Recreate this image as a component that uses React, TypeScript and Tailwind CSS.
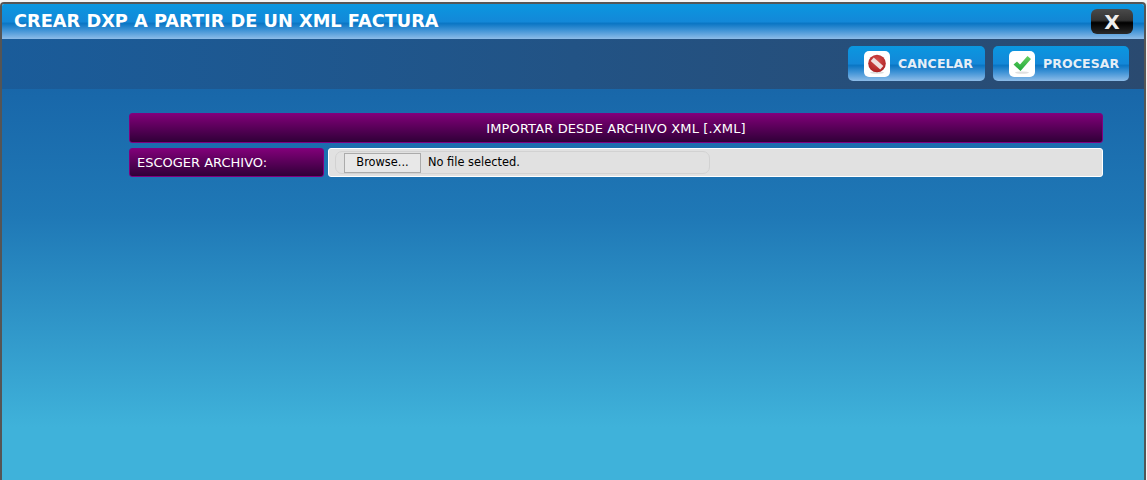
const headerGradient = "bg-[linear-gradient(to_bottom,#0a97e0_0%,#1388d8_50%,#0b76c4_56%,#3f93d6_75%,#8dbce8_100%)]";

const NoEntryIcon = () => (
  <svg width="20" height="20" viewBox="0 0 20 20">
    <defs>
      <radialGradient id="red" cx="50%" cy="35%" r="70%">
        <stop offset="0%" stopColor="#d8504c" />
        <stop offset="100%" stopColor="#a81c20" />
      </radialGradient>
    </defs>
    <ellipse cx="10" cy="18.6" rx="7" ry="1.2" fill="#dedede" />
    <circle cx="10" cy="9.5" r="8.8" fill="url(#red)" />
    <path d="M5.2 5.2 L14.8 13.8" stroke="#f0dede" strokeWidth="4.6" strokeLinecap="butt" />
  </svg>
);

const CheckIcon = () => (
  <svg width="22" height="22" viewBox="0 0 22 22">
    <defs>
      <linearGradient id="green" x1="0" y1="0" x2="0" y2="1">
        <stop offset="0%" stopColor="#66d060" />
        <stop offset="100%" stopColor="#1fa83a" />
      </linearGradient>
    </defs>
    <ellipse cx="11" cy="19.6" rx="7" ry="1.2" fill="#e0e0e0" />
    <path d="M2.5 11.5 L6 8.5 L9 11.5 L16.5 3 L20 6 L9.5 18 Z" fill="url(#green)" />
  </svg>
);

const ToolButton = ({ label, icon, width }: { label: string; icon: React.ReactNode; width: string }) => (
  <button className={`${width} ${headerGradient} flex h-[35px] items-center rounded-[5px] pl-[16px]`}>
    <span className="flex h-[26px] w-[26px] items-center justify-center rounded-[5px] bg-white">{icon}</span>
    <span className="ml-[8px] mt-[1px] text-[12.5px] font-bold tracking-[0.1px] text-[#e6eef6]">{label}</span>
  </button>
);

export default function App() {
  return (
    <div className="h-[480px] w-[1147px] overflow-hidden bg-[#f4f4f4] pr-[1px] pt-[2px] font-['DejaVu_Sans',sans-serif]">
      <div className="flex h-[478px] flex-col overflow-hidden rounded-t-[4px] border-x-2 border-t-2 border-[#555555]">
        <header className={`${headerGradient} flex h-[35px] shrink-0 items-center justify-between pl-[12px] pr-[11px]`}>
          <h1 className="mt-[1px] text-[17.75px] font-bold leading-none text-white">CREAR DXP A PARTIR DE UN XML FACTURA</h1>
          <button className="flex h-[25px] w-[42px] items-center justify-center rounded-[6px] bg-[linear-gradient(to_bottom,#4a4a4a_0%,#333333_45%,#000000_55%,#2a2a2a_100%)] text-[20px] font-bold text-[#eeeeee]">
            X
          </button>
        </header>

        <div className="flex flex-1 flex-col bg-[linear-gradient(to_bottom,#1660a4_0%,#1f78b6_40%,#3fb2da_88%,#3fb2da_100%)]">
          <div className="flex h-[50px] shrink-0 items-start justify-end gap-[8px] bg-[linear-gradient(to_right,#1a5c9a,#2a4a70)] pr-[15px] pt-[7px]">
            <ToolButton label="CANCELAR" icon={<NoEntryIcon />} width="w-[137px]" />
            <ToolButton label="PROCESAR" icon={<CheckIcon />} width="w-[136px]" />
          </div>

          <main className="ml-[127px] mt-[24px] flex w-[974px] flex-col gap-[5px] text-[13px] tracking-[0.13px] text-white">
            <div className="flex h-[30px] items-center justify-center rounded-[3px] border border-[#800080] bg-[linear-gradient(to_bottom,#800078,#300038)] pt-[1px]">
              IMPORTAR DESDE ARCHIVO XML [.XML]
            </div>
            <div className="flex h-[29px] gap-[4px]">
              <div className="flex w-[195px] items-center rounded-[3px] border border-[#800080] bg-[linear-gradient(to_bottom,#800078,#300038)] pl-[7px] tracking-normal">
                ESCOGER ARCHIVO:
              </div>
              <div className="flex flex-1 items-center rounded-[3px] border border-white bg-[#e1e1e1] pl-[6px] text-[11.4px] tracking-normal">
                <div className="flex h-[23px] w-[375px] items-center rounded-[7px] border border-[#d2d2d2] pl-[8px] text-black">
                  <span className="flex h-[20px] w-[77px] items-center justify-center border border-[#ababab] bg-[#e8e8e8]">Browse...</span>
                  <span className="ml-[7px]">No file selected.</span>
                </div>
              </div>
            </div>
          </main>
        </div>
      </div>
    </div>
  );
}
